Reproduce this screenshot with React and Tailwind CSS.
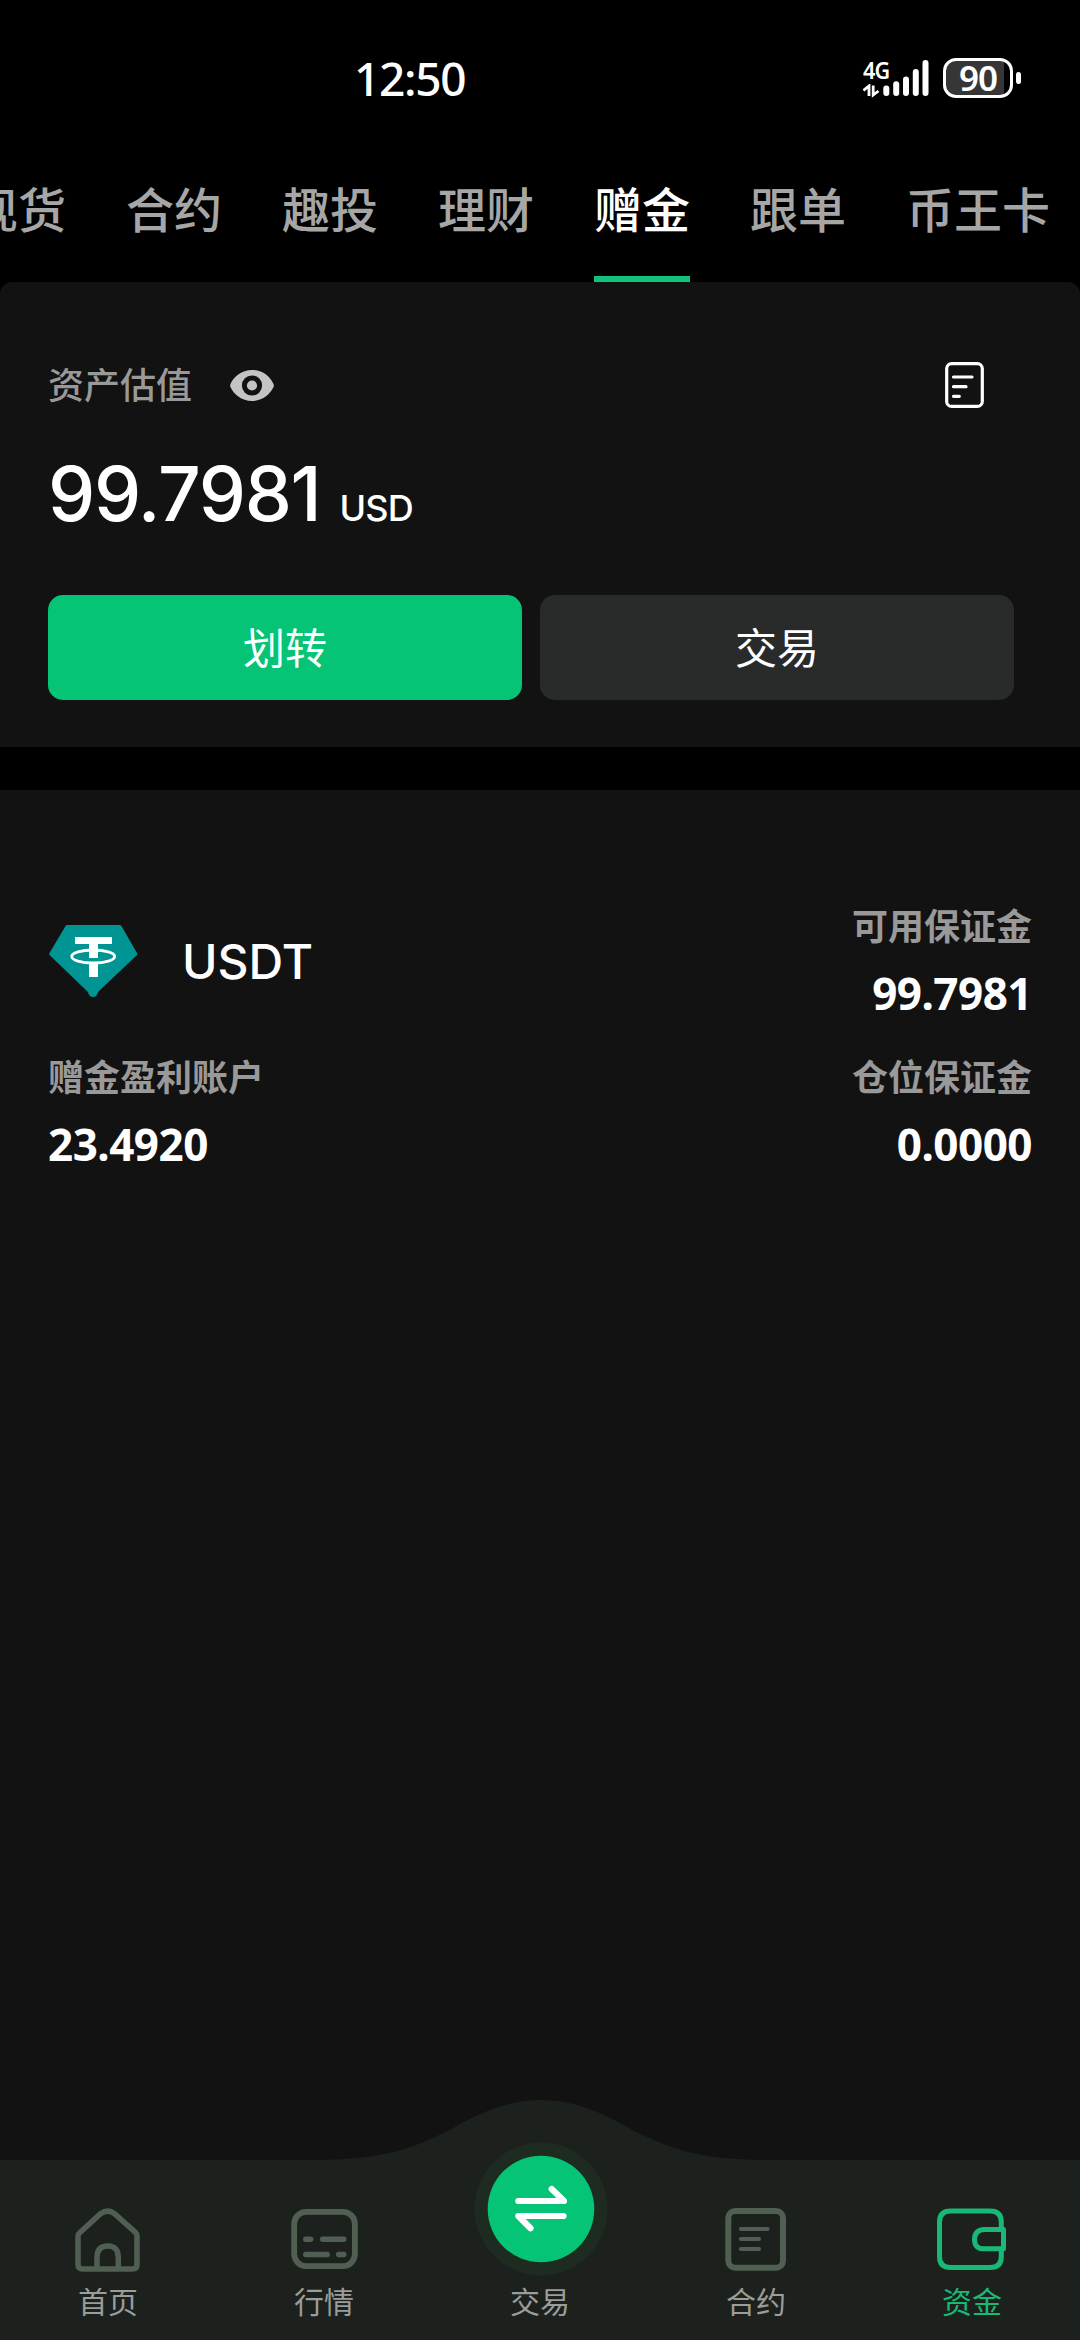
const TABS = ['现货', '合约', '趣投', '理财', '赠金', '跟单', '币王卡']

function StatusBar() {
  return (
    <div className="flex h-[132px] shrink-0 items-center pt-6 font-['Noto_Sans',sans-serif]">
      <span className="-mt-px ml-[354px] w-[509px] text-[46px] font-medium leading-none tracking-[-1.3px]">12:50</span>
      <div className="flex h-10 w-[66px] items-end">
        <div className="flex w-0 flex-col">
          <span className="-mb-px origin-left scale-x-90 text-[24px] font-semibold leading-[30px] tracking-[-1px]">4G</span>
          <svg width="17" height="14" viewBox="0 0 17 14" fill="none" stroke="#fff" strokeWidth="2.800">
            <path d="M0.500 6.500L6 2V12M10.200 1.500V11L15.500 7" />
          </svg>
        </div>
        <svg width="66" height="40" viewBox="0 0 66 40" fill="#fff">
          <rect x="20.300" y="27.500" width="6" height="10.500" rx="3" />
          <rect x="30.200" y="23.200" width="6" height="14.800" rx="3" />
          <rect x="40" y="18.500" width="6" height="19.500" rx="3" />
          <rect x="49.800" y="11" width="6" height="27" rx="3" />
          <rect x="59.500" y="2" width="6" height="36" rx="3" />
        </svg>
      </div>
      <div className="ml-3.5 flex items-center gap-[3px]">
        <div className="flex h-10 w-[70px] items-center justify-center rounded-[13px] border-[3px] border-white bg-linear-to-r from-[#363636] from-90% to-black to-90% text-[35px] font-semibold leading-none tracking-[-1px]">
          <span className="-mt-0.5">90</span>
        </div>
        <div className="h-3 w-[5px] rounded-full bg-white" />
      </div>
    </div>
  )
}

function Tabs() {
  return (
    <div className="flex h-[150px] shrink-0 overflow-hidden">
      <div className="-ml-[30px] flex shrink-0 gap-[60px]">
        {TABS.map((tab) => (
          <button
            key={tab}
            className={
              tab === '赠金'
                ? 'relative whitespace-nowrap text-5xl font-medium text-white'
                : 'relative whitespace-nowrap text-5xl font-medium text-[#a6a6a6]'
            }
          >
            {tab}
            {tab === '赠金' && <span className="absolute inset-x-0 bottom-0 h-1.5 bg-[#10c27a]" />}
          </button>
        ))}
      </div>
    </div>
  )
}

function Balance() {
  return (
    <section className="h-[465px] shrink-0 rounded-t-xl bg-[#121212] pl-12 pr-[66px] pt-[78px]">
      <div className="flex h-[46px] items-center pr-[30px]">
        <span className="text-4xl font-medium leading-none text-[#999]">资产估值</span>
        <svg className="ml-[38px] mt-1" width="44" height="31" viewBox="0 0 44 31">
          <path d="M22 0C32.5 0 40 6.500 43.400 13.700Q44.300 15.500 43.400 17.300C40 24.500 32.500 31 22 31S4 24.500 0.600 17.300Q-0.300 15.500 0.600 13.700C4 6.500 11.500 0 22 0Z" fill="#c4c4c4" />
          <circle cx="22" cy="15.500" r="7.600" fill="#c4c4c4" stroke="#121212" strokeWidth="5" />
        </svg>
        <svg className="ml-auto mt-1" width="39" height="46" viewBox="0 0 39 46" fill="none" stroke="#fff" strokeWidth="3.200" strokeLinecap="round">
          <rect x="1.700" y="1.600" width="35.600" height="42.800" rx="5" />
          <path d="M8.500 15H27M8.500 24.700H21M8.500 34.300H14.300" />
        </svg>
      </div>
      <div className="mt-12 flex h-20 items-baseline font-['Inter',sans-serif] leading-[80px]">
        <span className="text-[75px] font-medium tracking-[-1.3px]">99.7981</span>
        <span className="ml-[19px] text-[36px] font-medium tracking-[-0.8px]">USD</span>
      </div>
      <div className="mt-[61px] flex gap-[18px]">
        <button className="h-[105px] flex-1 rounded-[15px] bg-[#05c476] pb-[3px] text-[42px] leading-none">划转</button>
        <button className="h-[105px] flex-1 rounded-[15px] bg-[#292b2a] pb-[3px] text-[42px] leading-none">交易</button>
      </div>
    </section>
  )
}

function Stat({ label, value, right }) {
  return (
    <div className={right ? 'text-right' : ''}>
      <div className="h-12 text-4xl font-bold leading-[48px] text-[#999]">{label}</div>
      <div className="mt-[15px] h-[58px] font-['Noto_Sans',sans-serif] text-[44px] font-bold leading-[60px] tracking-[-0.5px]">{value}</div>
    </div>
  )
}

function Holdings() {
  return (
    <section className="mt-[43px] grid flex-1 grid-cols-2 content-start gap-y-[30px] bg-[#121212] px-12 pt-[110px]">
      <div className="flex items-center gap-11">
        <svg width="90" height="74" viewBox="0 0 90 74">
          <path d="M19 1H72Q73 1 74 3L89 29Q89.500 30 89 31L50 68Q49 73 45 73T40 68L1.500 31Q1 30 1.500 29L17 3Q18 1 19 1Z" fill="#009592" />
          <path d="M27 13H64V20H50V34H41V20H27ZM41 39H50V53H41Z" fill="#fff" />
          <ellipse cx="45.200" cy="32.500" rx="21.500" ry="6.500" fill="none" stroke="#fff" strokeWidth="2.800" />
        </svg>
        <span className="mt-0.5 font-['Inter',sans-serif] text-5xl font-medium leading-none">USDT</span>
      </div>
      <Stat label="可用保证金" value="99.7981" right />
      <Stat label="赠金盈利账户" value="23.4920" />
      <Stat label="仓位保证金" value="0.0000" right />
    </section>
  )
}

function HomeIcon() {
  return (
    <svg width="72" height="72" viewBox="0 0 72 72" fill="none" stroke="#515f53" strokeWidth="5.500">
      <path d="M8 28.500L28.500 9.700Q36 4.500 42.500 9.700L63.500 28.500Q65 30 65 32V60.500Q65 65 60.500 65H10.500Q6 65 6 60.500V32Q6 30 8 28.500Z" />
      <path d="M25 65V53.500Q25 42 35.700 42T46.300 53.500V65" />
    </svg>
  )
}

function MarketIcon() {
  return (
    <svg width="72" height="72" viewBox="0 0 72 72" fill="none" stroke="#515f53" strokeWidth="5.800" strokeLinecap="round">
      <rect x="6.200" y="7.900" width="60.700" height="54.200" rx="12" />
      <path d="M17.700 35.200H22.700M34.600 35.200H55.800M17.700 50.500H39.200M50.700 50.500H55.800" strokeWidth="5.400" />
    </svg>
  )
}

function ContractIcon() {
  return (
    <svg width="72" height="72" viewBox="0 0 72 72" fill="none" stroke="#515f53" strokeWidth="6" strokeLinecap="round">
      <rect x="8.300" y="7" width="54.700" height="56.700" rx="7" />
      <path d="M21 25H47.500M21 35H39M21 45H39" strokeWidth="4.200" />
    </svg>
  )
}

function WalletIcon() {
  return (
    <svg width="72" height="72" viewBox="0 0 72 72" fill="none" stroke="#18b976" strokeWidth="5">
      <path d="M65.300 28V18Q65.300 7 54.300 7H14.500Q3.500 7 3.500 18V52.500Q3.500 63.500 14.500 63.500H54.300Q65.300 63.500 65.300 52.500V43" />
      <path d="M67.500 25.500H48.500Q38.500 26 38.500 35.500T48.500 44.800H67.500Z" strokeLinejoin="round" />
    </svg>
  )
}

function TradeIcon() {
  return (
    <svg className="shrink-0" width="136" height="136" viewBox="0 0 136 136">
      <circle cx="69" cy="68" r="66.500" fill="#1d2b20" />
      <circle cx="69" cy="68" r="53.300" fill="#05c476" />
      <path d="M46.300 60H92L79.700 48M91.500 75H46.300L58.500 87.300" fill="none" stroke="#fff" strokeWidth="6.200" strokeLinecap="round" strokeLinejoin="round" />
    </svg>
  )
}

const NAV = [
  { label: '首页', icon: HomeIcon },
  { label: '行情', icon: MarketIcon },
  { label: '交易', icon: TradeIcon },
  { label: '合约', icon: ContractIcon },
  { label: '资金', icon: WalletIcon, active: true },
]

function BottomNav() {
  return (
    <nav className="relative flex h-[180px] shrink-0 bg-[#1d211d]">
      {/* raised curve behind the trade button */}
      <svg className="absolute -top-[60px] left-0" width="1080" height="61" viewBox="0 0 1080 61">
        <path d="M318 61V60C385 60 420 46 455 27C480 13 507 0 541 0S602 13 627 27C662 46 697 60 764 60V61Z" fill="#1d211d" />
      </svg>
      {NAV.map(({ label, icon: Icon, active }) => (
        <div key={label} className="relative flex flex-1 flex-col items-center justify-end pb-5">
          <Icon />
          <span
            className={
              active
                ? 'mt-1 text-3xl leading-10 text-[#18b976]'
                : label === '交易'
                  ? 'mt-[3px] text-3xl leading-10 text-[#9a9d9a]'
                  : 'mt-1 text-3xl leading-10 text-[#9a9d9a]'
            }
          >
            {label}
          </span>
        </div>
      ))}
    </nav>
  )
}

export default function App() {
  return (
    <div className="flex h-[2340px] w-[1080px] flex-col overflow-hidden bg-black font-['Noto_Sans_CJK_SC',sans-serif] text-white">
      <StatusBar />
      <Tabs />
      <Balance />
      <Holdings />
      <BottomNav />
    </div>
  )
}
